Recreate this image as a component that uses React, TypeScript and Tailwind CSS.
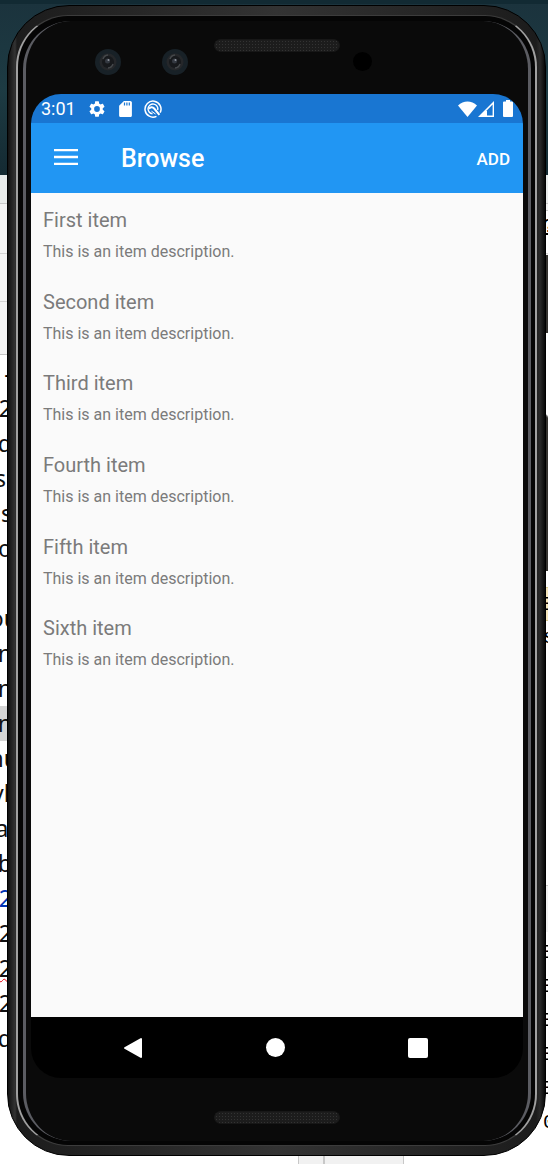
import React from "react";

const items = ["First item", "Second item", "Third item", "Fourth item", "Fifth item", "Sixth item"];

type Line = { text: string; tone?: string; wide?: boolean };

const leftLines: Line[] = [
  { text: "2" },
  { text: "d" },
  { text: "s " },
  { text: "s" },
  { text: "o" },
  { text: " " },
  { text: "ou", wide: true },
  { text: "n" },
  { text: "n" },
  { text: "n", tone: "bg-[#d4d4d4]" },
  { text: "nu", wide: true },
  { text: "vh", wide: true },
  { text: "ar", wide: true },
  { text: "b" },
  { text: "2", tone: "text-[#0033b3]" },
  { text: "2" },
  { text: "2", tone: "underline decoration-wavy decoration-red-600 decoration-1" },
  { text: "2" },
  { text: "d" },
];

function Desktop() {
  return (
    <div aria-hidden="true" className="absolute inset-0 flex flex-col bg-white">
      <div className="h-1 bg-[#122a33]" />
      <div className="h-[171px] bg-gradient-to-b from-[#1b333d] via-[#1d3b43] to-[#142a32]" />
      <div className="h-[29px] border-b border-[#c8c8c8] bg-[#e8ebea]" />
      <div className="flex h-[50px] justify-end border-b border-[#d2d2d2] bg-[#f2f2f2]">
        <div className="mt-1.5 w-[5px] overflow-hidden border-t border-[#c8c8c8] bg-white font-['Liberation_Mono',monospace] text-xl leading-8 text-black underline">
          ?
        </div>
      </div>
      <div className="h-12 border-b border-[#d2d2d2] bg-[#f2f2f2]" />
      <div className="flex flex-1 justify-between">
        <div className="flex w-3 flex-col">
          <div className="h-[53px] border-b border-[#c4c4c4] bg-[#f2f2f2]" />
          <div className="flex h-9 items-center justify-end font-['Noto_Sans',sans-serif] text-2xl">-</div>
          <div className="flex w-3 flex-col overflow-hidden font-['Noto_Sans',sans-serif] text-[23px] leading-[35px] text-[#111]">
            {leftLines.map((line, i) => (
              <div key={i} className={`flex h-[35px] justify-end whitespace-pre ${line.tone ?? ""}`}>
                <span className={line.wide ? "-mr-1.5" : ""}>{line.text}</span>
              </div>
            ))}
          </div>
        </div>
        <div className="flex w-[5px] flex-col overflow-hidden font-['Liberation_Mono',monospace] text-xl leading-[34px] text-black">
          <div className="mt-[285px] h-[34px] border-y border-[#d8c890] bg-[#f5e6bb]">Ξ</div>
          <div className="h-[34px]">s</div>
          <div className="mt-[230px] h-[47px] border-t border-[#c8c8c8] bg-[#f2f2f2]" />
          <div className="flex flex-col pt-1">
            {[0, 1, 2, 3, 4].map((n) => (
              <div key={n} className="h-[34px]">Ξ</div>
            ))}
            <div className="h-[34px]">0</div>
          </div>
        </div>
      </div>
      <div className="absolute bottom-0 left-[298px] flex h-2 w-[106px] border-x border-[#c8c8c8] bg-[#f1f1f1]">
        <div className="w-[26px] border-r-2 border-[#c8c8c8]" />
      </div>
      <div className="absolute right-0 top-[255px] h-[78px] w-1 bg-[#34322f]" />
      <div className="absolute right-0 top-[414px] h-[157px] w-1 rounded-tr-sm border-t-2 border-[#777] bg-[#34322f]" />
    </div>
  );
}

function Grille() {
  return (
    <div className="h-[13px] w-[126px] rounded-full border border-[#171717] bg-[#252525] bg-[radial-gradient(#333_1px,#1c1c1c_1px)] bg-[length:3px_3px]" />
  );
}

function Lens() {
  return (
    <svg viewBox="0 0 26 26" className="size-[26px]" aria-hidden="true">
      <circle cx="13" cy="13" r="13" fill="#182127" />
      <circle cx="13" cy="13" r="8.5" fill="#25272a" />
      <circle cx="13" cy="13" r="6" fill="#17191c" />
      <path d="M8 10a6 6 0 0 1 5-4M18 15a6 6 0 0 1-5 4" stroke="#45484b" strokeWidth="1.5" fill="none" />
      <circle cx="12.5" cy="12" r="2.5" fill="#343941" />
      <circle cx="13.5" cy="11" r="1" fill="#8e949c" />
    </svg>
  );
}

function GearIcon() {
  return (
    <svg viewBox="2 2 20 20" className="size-4" fill="currentColor" aria-hidden="true">
      <path d="M19.14 12.94c.04-.3.06-.61.06-.94 0-.32-.02-.64-.07-.94l2.03-1.58a.49.49 0 0 0 .12-.61l-1.92-3.32a.488.488 0 0 0-.59-.22l-2.39.96c-.5-.38-1.03-.7-1.62-.94l-.36-2.54a.484.484 0 0 0-.48-.41h-3.84c-.24 0-.43.17-.47.41l-.36 2.54c-.59.24-1.13.57-1.62.94l-2.39-.96c-.22-.08-.47 0-.59.22L2.74 8.87c-.12.21-.08.47.12.61l2.03 1.58c-.05.3-.09.63-.09.94s.02.64.07.94l-2.03 1.58a.49.49 0 0 0-.12.61l1.92 3.32c.12.22.37.29.59.22l2.39-.96c.5.38 1.03.7 1.62.94l.36 2.54c.05.24.24.41.48.41h3.84c.24 0 .44-.17.47-.41l.36-2.54c.59-.24 1.13-.56 1.62-.94l2.39.96c.22.08.47 0 .59-.22l1.92-3.32c.12-.22.07-.47-.12-.61l-2.01-1.58zM12 15.6A3.6 3.6 0 1 1 12 8.4a3.6 3.6 0 0 1 0 7.2z" />
    </svg>
  );
}

function CardIcon() {
  return (
    <svg viewBox="4 2 16 20" className="h-4 w-[13px]" fill="currentColor" aria-hidden="true">
      <path d="M18 2h-8L4.020 8 4 20c0 1.100.9 2 2 2h12c1.100 0 2-.9 2-2V4c0-1.100-.9-2-2-2zm-6.500 5.500H10V4h1.500v3.500zm3 0H13V4h1.500v3.500zm3 0H16V4h1.500v3.500z" />
    </svg>
  );
}

function DebugIcon() {
  return (
    <svg viewBox="0 0 18 18" className="size-[18px]" fill="none" stroke="currentColor" aria-hidden="true">
      <path d="M12.500 16.300A8 8 0 1 1 16.200 12.600" strokeWidth="1.500" />
      <path d="M8.500 13.800A4.900 4.900 0 1 1 13.700 10" strokeWidth="1.400" />
      <path d="M5 8.800c1.500-1.800 3.500-2.200 5.200-.3l5.200 6.300" strokeWidth="2" />
      <path d="M7.500 11.200l4 2.800" strokeWidth="1" />
    </svg>
  );
}

function StatusBar() {
  return (
    <div className="flex h-[29px] items-center justify-between bg-[#1976d2] px-[10px] text-white">
      <div className="flex items-center">
        <span className="w-12 text-lg leading-7">3:01</span>
        <GearIcon />
        <span className="ml-[14px] flex"><CardIcon /></span>
        <span className="ml-3 flex"><DebugIcon /></span>
      </div>
      <div className="flex items-center">
        <svg viewBox="0 0 19 16" className="h-4 w-[19px]" fill="currentColor" aria-hidden="true">
          <path d="M9.500 16 0 4.500C5.500-.8 13.500-.8 19 4.500z" />
        </svg>
        <svg viewBox="0 0 16 16" className="ml-px size-4" aria-hidden="true">
          <path d="M0 16 16 0v16z" fill="currentColor" />
          <path d="M9 9.200 14.600 3.600v11H9z" fill="#1976d2" />
        </svg>
        <svg viewBox="0 0 10 17" className="ml-[9px] h-[17px] w-[10px]" fill="currentColor" aria-hidden="true">
          <path d="M3 0h4v1.500h2a1 1 0 0 1 1 1V16a1 1 0 0 1-1 1H1a1 1 0 0 1-1-1V2.500a1 1 0 0 1 1-1h2z" />
        </svg>
      </div>
    </div>
  );
}

function AppBar() {
  return (
    <header className="flex h-[70px] items-center bg-[#2196f3] pl-[23px] pr-[13px] pt-0.5 text-white">
      <button type="button" aria-label="Open menu" className="-mt-1 flex size-6 items-center justify-center">
        <svg viewBox="0 0 24 16" className="h-4 w-6" fill="currentColor" aria-hidden="true">
          <path d="M0 0h24v2.300H0zM0 6.850h24v2.300H0zM0 13.700h24V16H0z" />
        </svg>
      </button>
      <h1 className="ml-[43px] flex-1 text-[25px] font-medium leading-8">Browse</h1>
      <button type="button" className="text-[17px] font-medium leading-6">ADD</button>
    </header>
  );
}

function NavBar() {
  return (
    <nav className="flex h-[61px] items-center justify-between bg-black pl-[92px] pr-[95px]">
      <button type="button" aria-label="Back">
        <svg viewBox="0 0 20 22" className="h-[22px] w-5" aria-hidden="true">
          <path d="M18 2v18L2 11z" fill="white" stroke="white" strokeWidth="2" strokeLinejoin="round" />
        </svg>
      </button>
      <button type="button" aria-label="Home" className="size-[19px] rounded-full bg-white" />
      <button type="button" aria-label="Recent apps" className="size-5 rounded-xs bg-white" />
    </nav>
  );
}

export default function App() {
  return (
    <div className="relative min-h-screen overflow-hidden pb-2 pl-[7px] pr-[2px] pt-[5px] font-[Roboto,sans-serif]">
      <Desktop />
      <div className="relative rounded-[62px] border border-black bg-[linear-gradient(90deg,#111,#333_7px,#1c1c1c_9px,#333_50%,#1c1c1c_calc(100%-9px),#2a2a2a_calc(100%-5px),#080808)] px-2 pb-[9px] pt-[9px]">
        <div className="rounded-[52px] border-x-2 border-y border-x-[#a0a0a0] border-y-[#3c3c3c] bg-[#050505] pb-1 pl-[5px] pr-1 pt-[5px]">
          <div className="flex flex-col rounded-[48px] border-x-3 border-x-[#5b5c62] bg-[#0a0a0a] px-[5px]">
            <div className="grid h-[73px] grid-cols-[1fr_auto_1fr] items-start">
              <div className="flex gap-[41px] pl-16 pt-7">
                <Lens />
                <Lens />
              </div>
              <div className="pt-[18px]"><Grille /></div>
              <div className="pl-[13px] pt-[31px]">
                <div className="size-[19px] rounded-full bg-black" />
              </div>
            </div>
            <div className="overflow-hidden rounded-[30px]">
              <StatusBar />
              <AppBar />
              <main className="min-h-[824px] bg-[#fafafa] px-3 pt-[11px]">
                <ul className="grid h-[490px] grid-rows-6 text-[#7b7b7b]">
                  {items.map((name) => (
                    <li key={name}>
                      <h2 className="text-xl leading-8">{name}</h2>
                      <p className="text-base leading-8">This is an item description.</p>
                    </li>
                  ))}
                </ul>
              </main>
              <NavBar />
            </div>
            <div className="flex h-[63px] items-center justify-center pt-4"><Grille /></div>
          </div>
        </div>
      </div>
    </div>
  );
}
